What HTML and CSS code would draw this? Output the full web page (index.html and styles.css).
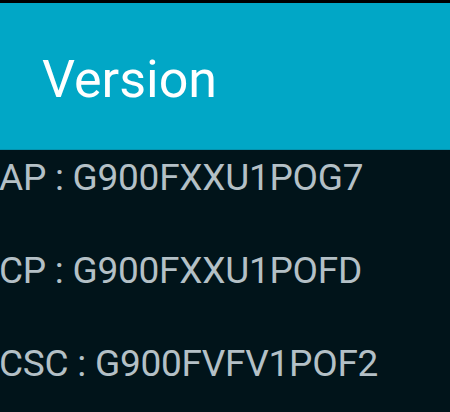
FILE: index.html
```html
<!DOCTYPE html>
<html>
<head>
<meta charset="utf-8">
<link rel="stylesheet" href="styles.css">
</head>
<body>
<div class="statusbar"></div>
<header class="header"><h1 class="title">Version</h1></header>
<main class="list">
  <div class="row">AP : G900FXXU1POG7</div>
  <div class="row">CP : G900FXXU1POFD</div>
  <div class="row">CSC : G900FVFV1POF2</div>
</main>
</body>
</html>
```
FILE: styles.css
```css
html, body {
  margin: 0;
  padding: 0;
  width: 450px;
  height: 412px;
  overflow: hidden;
  background: #01141a;
  font-family: Roboto, "Noto Sans", sans-serif;
}
.statusbar {
  height: 3px;
  background: #000;
}
.header {
  height: 146px;
  background: #01a7c6;
  border-bottom: 1px solid #0592ad;
}
.title {
  margin: 0;
  padding: 47px 0 0 42px;
  font-size: 52px;
  line-height: 60px;
  font-weight: 400;
  color: #ffffff;
}
.list {
  display: flex;
  flex-direction: column;
  gap: 37px;
  margin-left: -1px;
}
.row {
  font-size: 37px;
  line-height: 56px;
  letter-spacing: -0.25px;
  color: #b4c0c6;
  white-space: nowrap;
}
```
